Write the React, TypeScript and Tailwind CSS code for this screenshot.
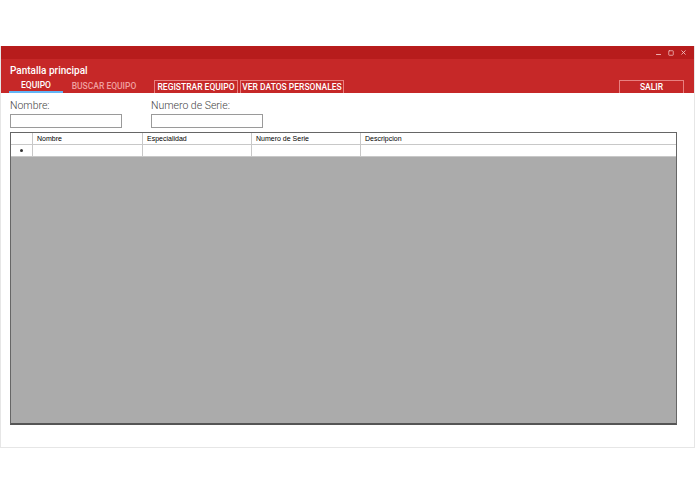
import { Minus, Square, X } from 'lucide-react';

const columns = [
  { label: 'Nombre', width: 'w-[110px]' },
  { label: 'Especialidad', width: 'w-[109px]' },
  { label: 'Numero de Serie', width: 'w-[109px]' },
  { label: 'Descripcion', width: 'flex-1' },
];

function GridRow({ header }: { header?: boolean }) {
  return (
    <div className="flex h-[12px] bg-white border-b border-[#c8c8c8]">
      <div className="w-[22px] border-r border-[#c8c8c8] flex items-center justify-center">
        {!header && <span className="w-[3px] h-[3px] rounded-full bg-[#333]" />}
      </div>
      {columns.map((col, i) => (
        <div
          key={col.label}
          className={`${col.width} ${i < columns.length - 1 ? 'border-r border-[#c8c8c8]' : ''} pl-[4px] flex items-center text-[7px] text-black leading-none`}
        >
          {header ? col.label : ''}
        </div>
      ))}
    </div>
  );
}

export default function App() {
  return (
    <div
      className="w-[695px] h-[494px] bg-white pt-[46px]"
      style={{ fontFamily: 'Roboto, "Liberation Sans", sans-serif' }}
    >
      <div className="h-[402px] w-[695px] border border-t-0 border-[#e6e6e6] flex flex-col">
        {/* barra de titulo */}
        <div className="h-[13px] bg-[#b71c1c] flex items-center justify-end gap-[6px] pr-[7px] text-[#f3c4c4]">
          <Minus size={7} strokeWidth={3} className="mt-[3px]" />
          <Square size={6} strokeWidth={3} />
          <X size={7} strokeWidth={3} />
        </div>

        {/* encabezado */}
        <div className="h-[34px] bg-[#c62828] flex flex-col">
          <div className="h-[21px] flex items-end pl-[9px] text-white text-[10px] font-medium leading-none pb-[4px]">
            Pantalla principal
          </div>
          <div className="flex h-[13px] items-stretch pl-[8px] text-[8.5px] font-medium leading-none">
            <div className="w-[54px] flex items-center justify-center text-white border-b-2 border-[#64b5f6]">
              EQUIPO
            </div>
            <div className="w-[82px] flex items-center justify-center text-[#f0a0a0]">
              BUSCAR EQUIPO
            </div>
            <div className="ml-[9px] w-[84px] flex items-center justify-center text-white border border-b-0 border-[#e88080]">
              REGISTRAR EQUIPO
            </div>
            <div className="ml-[2px] w-[104px] flex items-center justify-center text-white border border-b-0 border-[#e88080]">
              VER DATOS PERSONALES
            </div>
            <div className="ml-auto mr-[10px] w-[65px] flex items-center justify-center text-white border border-b-0 border-[#e88080]">
              SALIR
            </div>
          </div>
        </div>

        {/* contenido */}
        <div className="flex-1 px-[9px] pt-[6px]">
          <div className="flex gap-[29px]">
            <div className="flex flex-col">
              <span className="text-[10.5px] font-light text-[#444] leading-[14px] mb-[1px]">Nombre:</span>
              <input className="w-[112px] h-[14px] border border-[#9a9a9a] outline-none" />
            </div>
            <div className="flex flex-col">
              <span className="text-[10.5px] font-light text-[#444] leading-[14px] mb-[1px]">Numero de Serie:</span>
              <input className="w-[112px] h-[14px] border border-[#9a9a9a] outline-none" />
            </div>
          </div>

          <div
            className="mt-[4px] w-[667px] h-[293px] border border-[#666] border-b-2 border-b-[#555] bg-[#ababab] flex flex-col"
            style={{ fontFamily: '"Liberation Sans", Arial, sans-serif' }}
          >
            <GridRow header />
            <GridRow />
          </div>
        </div>
      </div>
    </div>
  );
}
